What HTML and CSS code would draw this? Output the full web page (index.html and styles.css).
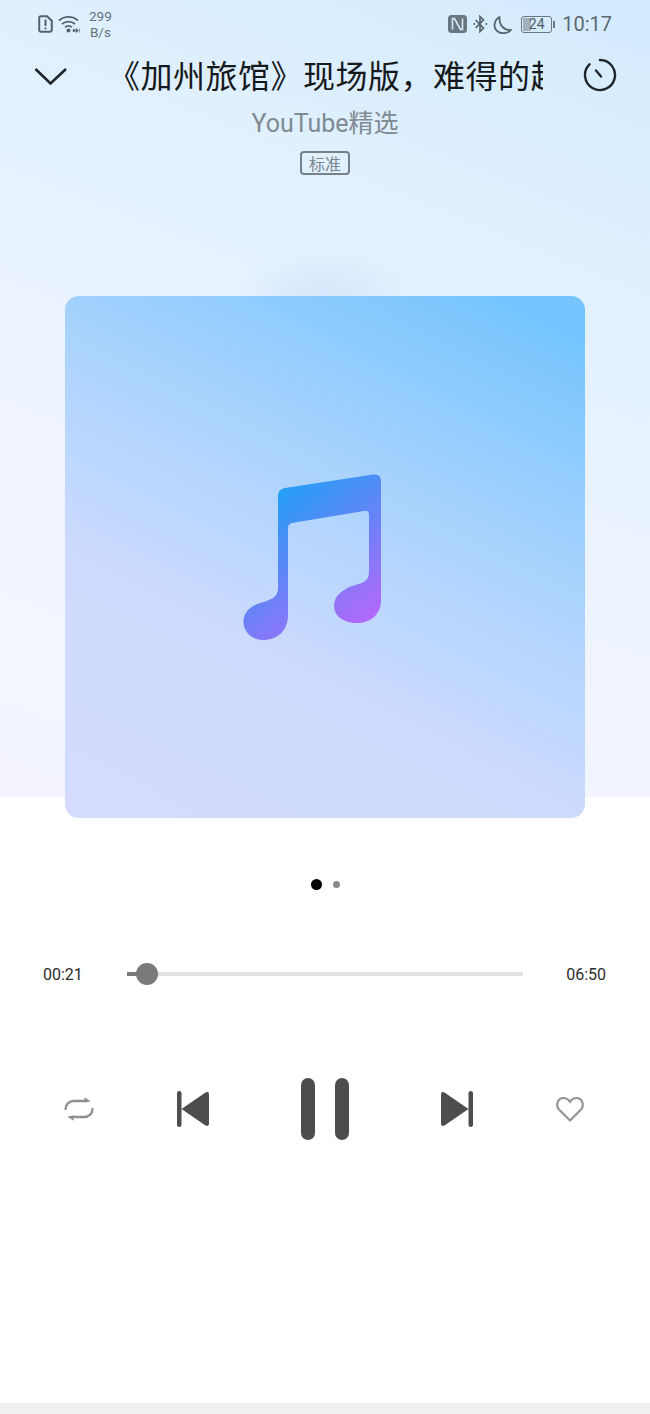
FILE: index.html
```html
<!DOCTYPE html>
<html lang="zh-CN">
<head>
    <meta charset="UTF-8">
    <meta name="viewport" content="width=device-width, initial-scale=1.0">
    <title>Player</title>
    <link rel="stylesheet" href="styles.css">
</head>
<body>
<div class="page">
    <div class="hero">
        <div class="statusBar">
            <svg class="simIcon" width="15" height="18" viewBox="0 0 15 18"><path d="M3 1.200h6l4.800 4.600V15a1.800 1.800 0 0 1-1.800 1.800H3A1.800 1.800 0 0 1 1.200 15V3A1.800 1.800 0 0 1 3 1.200z" fill="none" stroke="#56626b" stroke-width="2"/><path d="M7.500 4.500v6.500M7.500 12.400v1.800" stroke="#56626b" stroke-width="2"/></svg>
            <svg class="wifiIcon" width="23" height="19" viewBox="0 0 23 19"><path d="M1 5.500C6.500.6 14.500.6 20 5.500M4 9c3.800-3.200 9.200-3.200 13 0M7 12.300c2.200-1.700 4.800-1.700 7 0" fill="none" stroke="#56626b" stroke-width="1.800"/><circle cx="10.500" cy="15.500" r="2" fill="#56626b"/><path d="M15 14.500h2v2h-2zM18 13.500l2.500 2-2.500 2zM21.500 13.500v4" fill="#56626b" stroke="#56626b" stroke-width=".6"/></svg>
            <div class="netSpeed"><span>299</span><span>B/s</span></div>
            <div class="statusRight">
                <svg width="19" height="18" viewBox="0 0 19 18"><rect x="0" y="0" width="19" height="18" rx="3.500" fill="#6a767f"/><path d="M4.500 14.500V3.500h2l6 11h2V3.500" fill="none" stroke="#d6ebfd" stroke-width="1.600"/></svg>
                <svg class="btIcon" width="15" height="18" viewBox="0 0 15 18"><path d="M2.500 5l8 8-3.500 3.500v-15L10.500 5l-8 8" fill="none" stroke="#56626b" stroke-width="1.700"/><circle cx="1.300" cy="9" r="1" fill="#56626b"/><circle cx="13.300" cy="9" r="1" fill="#56626b"/></svg>
                <svg class="moonIcon" width="20" height="19" viewBox="0 0 20 19"><path d="M6.500 2C1 5 0 13 4 16c4 3.500 11 2.500 14-1C12 16 6 11 6.500 2z" fill="none" stroke="#56626b" stroke-width="1.800" stroke-linejoin="round"/></svg>
                <div class="battery"><div class="batteryBody"><div class="batteryFill"></div><span>24</span></div><div class="batteryNub"></div></div>
                <span class="clock">10:17</span>
            </div>
        </div>
        <div class="topRow">
            <svg class="chevron" width="34" height="20" viewBox="0 0 34 20"><path d="M1.500 3l15 14.500L32 3" fill="none" stroke="#20262b" stroke-width="2.600"/></svg>
            <div class="songTitle"><span>《加州旅馆》现场版，难得的超清版本</span></div>
            <svg class="timerIcon" width="34" height="34" viewBox="0 0 34 34"><path d="M17 2a15 15 0 1 1-10.500 4.300" fill="none" stroke="#20262b" stroke-width="2.400" stroke-linecap="round"/><path d="M13 12.500l5 6" stroke="#20262b" stroke-width="2.400" stroke-linecap="round"/></svg>
        </div>
        <div class="artist">YouTube精选</div>
        <div class="qualityTag">标准</div>
        <div class="cover">
            <svg class="noteIcon" width="145" height="175" viewBox="240 470 145 175">
                <defs>
                    <linearGradient id="noteGrad" gradientUnits="userSpaceOnUse" x1="275" y1="485" x2="385" y2="630">
                        <stop offset="0" stop-color="#1fa2f6"/>
                        <stop offset="0.42" stop-color="#5f86f6"/>
                        <stop offset="1" stop-color="#c462fc"/>
                    </linearGradient>
                </defs>
                <path d="M285 488L373 474.500Q381 473.500 381 481L381 600C381 615 370 624 354 623C341 622 334 614 334 606C334 596 342 590 352 586C362 583 369 582 369 572L369 515Q369 510 364 511L292 523Q288 524 288 528L288 615C288 632 276 640 263 640C251 640 243.500 631 243.500 622C243.500 612 251 606 260 603C270 600 278 598 278 588L278 496Q278 489 285 488Z" fill="url(#noteGrad)"/>
            </svg>
        </div>
    </div>

    <div class="pageDots">
        <div class="dot dotActive"></div>
        <div class="dot"></div>
    </div>

    <div class="progressRow">
        <span class="timeLabel">00:21</span>
        <div class="track">
            <div class="trackPlayed"></div>
            <div class="thumb"></div>
        </div>
        <span class="timeLabel">06:50</span>
    </div>

    <div class="controls">
        <svg class="ctrlSide" width="30" height="26" viewBox="0 0 30 26"><path d="M1.500 13a8 8 0 0 1 8-8H22M28.500 13a8 8 0 0 1-8 8H8" fill="none" stroke="#8f8f8f" stroke-width="2.300" stroke-linecap="round"/><path d="M20.500 1.200L26.800 5.400 20.500 6.500zM9.500 24.800L3.200 20.600 9.500 19.500z" fill="#8f8f8f"/></svg>
        <svg class="ctrlSkip" width="32" height="36" viewBox="0 0 32 36"><rect x="0" y="0" width="4.500" height="36" rx="2.200" fill="#4d4d4d"/><path d="M4.500 18L28.500 1.500Q32 0 32 3.500V32.500Q32 36 28.500 34.500Z" fill="#4d4d4d"/></svg>
        <div class="pauseBtn"><div class="pauseBar"></div><div class="pauseBar"></div></div>
        <svg class="ctrlSkip" width="32" height="36" viewBox="0 0 32 36"><rect x="27.500" y="0" width="4.500" height="36" rx="2.200" fill="#4d4d4d"/><path d="M27.500 18L3.500 1.500Q0 0 0 3.500V32.500Q0 36 3.500 34.500Z" fill="#4d4d4d"/></svg>
        <svg class="ctrlSide" width="28" height="26" viewBox="0 0 28 26"><path d="M14 24.500L3 13.500C-.5 9.500 1.500 2 7.500 2c3 0 5 1.500 6.500 4 1.500-2.500 3.500-4 6.500-4 6 0 8 7.500 4.500 11.500z" fill="none" stroke="#949494" stroke-width="2.200" stroke-linejoin="round"/></svg>
    </div>

    <div class="navStrip"></div>
</div>
</body>
</html>
```
FILE: styles.css
```css
* {
    box-sizing: border-box;
}

body {
    margin: 0;
    padding: 0;
    background: #fff;
    font-family: Roboto, "Noto Sans CJK SC", sans-serif;
}

.page {
    display: flex;
    flex-direction: column;
    width: 650px;
    height: 1414px;
    overflow: hidden;
}

.hero {
    height: 797px;
    flex-shrink: 0;
    background:
        radial-gradient(ellipse 95px 50px at 325px 298px, #d8e5fb, rgba(216, 229, 251, 0)),
        linear-gradient(202deg, #d3ebfe 0%, #e2f1fe 32%, #f2f5ff 72%, #f3f4ff 100%);
}

.statusBar {
    display: flex;
    align-items: center;
    height: 48px;
    padding: 0 38px;
    color: #56626b;
}

.wifiIcon {
    margin-left: 5px;
}

.netSpeed {
    display: flex;
    flex-direction: column;
    align-items: center;
    margin-left: 8px;
    font-size: 13.5px;
    line-height: 16px;
    color: #66727b;
}

.statusRight {
    display: flex;
    align-items: center;
    margin-left: auto;
}

.btIcon {
    margin-left: 6px;
}

.moonIcon {
    margin-left: 5px;
}

.battery {
    display: flex;
    align-items: center;
    margin-left: 8px;
}

.batteryBody {
    position: relative;
    display: flex;
    align-items: center;
    justify-content: center;
    width: 31px;
    height: 17px;
    border: 1px solid #6c7780;
    border-radius: 3px;
    font-size: 14px;
    color: #4e5a63;
}

.batteryFill {
    position: absolute;
    left: 1px;
    top: 1px;
    bottom: 1px;
    width: 28%;
    background: #a5b1ba;
}

.batteryBody span {
    position: relative;
}

.batteryNub {
    width: 2px;
    height: 7px;
    margin-left: 1px;
    background: #6c7780;
}

.clock {
    margin-left: 7px;
    font-size: 20px;
    color: #5c6871;
}

.topRow {
    display: flex;
    align-items: center;
    height: 58px;
    padding-left: 34px;
}

.chevron {
    flex-shrink: 0;
    margin-top: -2px;
}

.songTitle {
    width: 435px;
    margin-left: 40px;
    overflow: hidden;
    white-space: nowrap;
    font-size: 32px;
    letter-spacing: 0.5px;
    line-height: 44px;
    color: #16191c;
}

.timerIcon {
    flex-shrink: 0;
    margin-left: 40px;
    margin-top: -4px;
}

.artist {
    text-align: center;
    font-size: 25px;
    line-height: 36px;
    color: #808a92;
}

.qualityTag {
    display: flex;
    align-items: center;
    justify-content: center;
    width: 50px;
    height: 24px;
    margin: 9px auto 0;
    border: 2px solid #76818a;
    border-radius: 4px;
    font-size: 16px;
    color: #7b858c;
}

.cover {
    display: flex;
    align-items: center;
    justify-content: center;
    width: 520px;
    height: 522px;
    margin: 121px 0 0 65px;
    border-radius: 14px;
    background: linear-gradient(207deg, #76c5fe 6%, #a9d3fd 38%, #cfdbfe 68%, #d4dbff 100%);
}

.noteIcon {
    margin-left: -26px;
    margin-top: 1px;
}

.pageDots {
    display: flex;
    align-items: center;
    justify-content: center;
    gap: 11px;
    height: 12px;
    margin-top: 81px;
}

.dot {
    width: 7px;
    height: 7px;
    border-radius: 50%;
    background: #8a8a8a;
}

.dotActive {
    width: 11px;
    height: 11px;
    background: #000;
}

.progressRow {
    display: flex;
    align-items: center;
    height: 24px;
    margin-top: 72px;
    padding: 0 44px 0 43px;
}

.timeLabel {
    font-size: 16px;
    color: #2c2c2c;
}

.track {
    position: relative;
    flex: 1;
    height: 4px;
    margin: 0 43px 0 44px;
    background: #e1e1e1;
}

.trackPlayed {
    width: 20px;
    height: 100%;
    background: #7a7a7a;
}

.thumb {
    position: absolute;
    left: 9px;
    top: -9px;
    width: 22px;
    height: 22px;
    border-radius: 50%;
    background: #7a7a7a;
}

.controls {
    display: flex;
    align-items: center;
    gap: 83px;
    height: 64px;
    margin-top: 91px;
    padding-left: 64px;
}

.ctrlSide,
.ctrlSkip {
    flex-shrink: 0;
}

.pauseBtn {
    display: flex;
    gap: 20px;
    margin: 0 9px;
}

.pauseBar {
    width: 14px;
    height: 62px;
    border-radius: 7px;
    background: #4d4d4d;
}

.navStrip {
    height: 11px;
    margin-top: auto;
    background: #f0f0f0;
}
```
